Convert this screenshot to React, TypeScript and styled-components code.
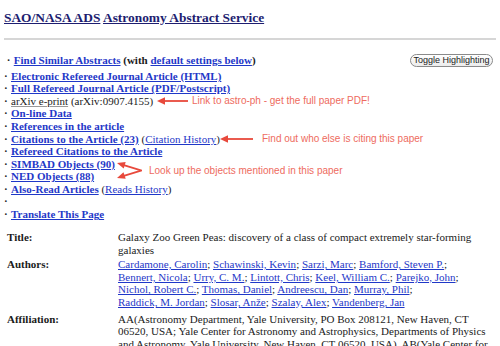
import React from "react";
import styled, { createGlobalStyle } from "styled-components";

const Global = createGlobalStyle`
  html, body { margin: 0; padding: 0; background: #fff; }
  body { font-family: "Liberation Serif", "Times New Roman", serif; color: #1a1a1a; width: 500px; height: 346px; overflow: hidden; }
`;

const Page = styled.div`
  padding: 0 4px;
`;

const Heading = styled.h1`
  margin: 0;
  padding-top: 9px;
  font-size: 13.4px;
  font-weight: bold;
  line-height: 17px;
  a { color: #1d1d70; text-decoration: underline; }
`;

const Rule = styled.hr`
  margin: 12px 0 0 0;
  border: none;
  border-top: 2px solid #d6d6d6;
`;

const List = styled.div`
  position: relative;
  margin-top: 14px;
  font-size: 11px;
  line-height: 12.4px;
`;

const Row = styled.div<{ $gap?: number }>`
  display: flex;
  align-items: baseline;
  margin-top: ${(p) => p.$gap ?? 0}px;
  white-space: nowrap;
`;

const Bullet = styled.span`
  width: 7px;
  flex: none;
  font-weight: bold;
`;

const StrongLink = styled.a`
  color: #1f38c8;
  font-weight: bold;
  text-decoration: underline;
`;

const PlainLink = styled.a`
  color: #1f38c8;
  text-decoration: underline;
`;

const DarkLink = styled.a`
  color: #222;
  text-decoration: underline;
  text-decoration-color: #999;
`;

const Bold = styled.span`
  font-weight: bold;
`;

const ToggleButton = styled.button`
  margin-left: auto;
  margin-right: 3px;
  height: 13px;
  width: 83px;
  padding: 0;
  border: 1px solid #8a8a8a;
  border-radius: 7px;
  background: linear-gradient(#ffffff, #ececec);
  font-family: "Liberation Sans", Arial, sans-serif;
  font-size: 9px;
  line-height: 11px;
  color: #222;
  align-self: center;
`;

const Note = styled.div<{ $x: number; $y: number }>`
  position: absolute;
  left: ${(p) => p.$x}px;
  top: ${(p) => p.$y}px;
  display: flex;
  align-items: center;
  font-family: "Liberation Sans", Arial, sans-serif;
  font-size: 10px;
  line-height: 12px;
  color: #ee6b5e;
  white-space: nowrap;
`;

const NoteText = styled.span<{ $pad: number }>`
  padding-left: ${(p) => p.$pad}px;
`;

const Arrow = ({ w }: { w: number }) => (
  <svg width={w} height="10" viewBox={`0 0 ${w} 10`} style={{ display: "block" }}>
    <line x1="6" y1="5" x2={w} y2="5" stroke="#e8493c" strokeWidth="1.8" />
    <polygon points="0,5 8,1.3 8,8.7" fill="#e8493c" />
  </svg>
);

const Fork = () => (
  <svg width="25" height="21" viewBox="0 0 25 21" style={{ display: "block" }}>
    <polyline points="6,4.8 24,10.5 6,16.2" fill="none" stroke="#e8493c" strokeWidth="1.8" strokeLinejoin="miter" />
    <polygon points="0,3 8.7,1.9 6.7,8.6" fill="#e8493c" />
    <polygon points="0,18 8.7,18.8 6.5,12.2" fill="#e8493c" />
  </svg>
);

const Table = styled.div`
  display: grid;
  grid-template-columns: 111px 1fr;
  row-gap: 1.8px;
  margin-top: 10px;
  padding-left: 3px;
  padding-right: 4px;
  font-size: 11px;
  line-height: 12.7px;
`;

const Label = styled.div<{ $top?: number }>`
  font-weight: bold;
  margin-top: ${(p) => p.$top ?? 0}px;
`;

const Value = styled.div<{ $top?: number }>`
  margin-top: ${(p) => p.$top ?? 0}px;
`;

const AuthorLine = styled.div`
  white-space: nowrap;
`;

const authorLines = [
  ["Cardamone, Carolin", "Schawinski, Kevin", "Sarzi, Marc", "Bamford, Steven P."],
  ["Bennert, Nicola", "Urry, C. M.", "Lintott, Chris", "Keel, William C.", "Parejko, John"],
  ["Nichol, Robert C.", "Thomas, Daniel", "Andreescu, Dan", "Murray, Phil"],
  ["Raddick, M. Jordan", "Slosar, Anže", "Szalay, Alex", "Vandenberg, Jan"],
];

export default function App() {
  return (
    <Page>
      <Global />
      <Heading>
        <a href="#">SAO/NASA ADS</a> <a href="#">Astronomy Abstract Service</a>
      </Heading>
      <Rule />
      <List>
        <Row>
          <Bullet>&nbsp;·</Bullet>&nbsp;
          <StrongLink href="#">Find Similar Abstracts</StrongLink>&nbsp;<Bold>(with</Bold>&nbsp;
          <StrongLink href="#">default settings below</StrongLink><Bold>)</Bold>
          <ToggleButton>Toggle Highlighting</ToggleButton>
        </Row>
        <Row $gap={3}><Bullet>·</Bullet><StrongLink href="#">Electronic Refereed Journal Article (HTML)</StrongLink></Row>
        <Row><Bullet>·</Bullet><StrongLink href="#">Full Refereed Journal Article (PDF/Postscript)</StrongLink></Row>
        <Row><Bullet>·</Bullet><DarkLink href="#">arXiv e-print</DarkLink>&nbsp;(arXiv:0907.4155)</Row>
        <Row><Bullet>·</Bullet><StrongLink href="#">On-line Data</StrongLink></Row>
        <Row><Bullet>·</Bullet><StrongLink href="#">References in the article</StrongLink></Row>
        <Row $gap={1}><Bullet>·</Bullet><StrongLink href="#">Citations to the Article (23)</StrongLink>&nbsp;(<PlainLink href="#">Citation History</PlainLink>)</Row>
        <Row><Bullet>·</Bullet><StrongLink href="#">Refereed Citations to the Article</StrongLink></Row>
        <Row><Bullet>·</Bullet><StrongLink href="#">SIMBAD Objects (90)</StrongLink></Row>
        <Row><Bullet>·</Bullet><StrongLink href="#">NED Objects (88)</StrongLink></Row>
        <Row><Bullet>·</Bullet><StrongLink href="#">Also-Read Articles</StrongLink>&nbsp;(<PlainLink href="#">Reads History</PlainLink>)</Row>
        <Row><Bullet>·</Bullet></Row>
        <Row $gap={1}><Bullet>·</Bullet><StrongLink href="#">Translate This Page</StrongLink></Row>

        <Note $x={153} $y={41}>
          <Arrow w={31} />
          <NoteText $pad={4}>Link to astro-ph - get the full paper PDF!</NoteText>
        </Note>
        <Note $x={216} $y={79}>
          <Arrow w={33} />
          <NoteText $pad={9}>Find out who else is citing this paper</NoteText>
        </Note>
        <Note $x={113} $y={106}>
          <Fork />
          <NoteText $pad={7}>Look up the objects mentioned in this paper</NoteText>
        </Note>
      </List>
      <Table>
        <Label>Title:</Label>
        <Value>Galaxy Zoo Green Peas: discovery of a class of compact extremely star-forming galaxies</Value>
        <Label>Authors:</Label>
        <Value>
          {authorLines.map((line, li) => (
            <AuthorLine key={li}>
              {line.map((a, i) => (
                <React.Fragment key={a}>
                  <PlainLink href="#">{a}</PlainLink>
                  {li === authorLines.length - 1 && i === line.length - 1 ? "" : "; "}
                </React.Fragment>
              ))}
            </AuthorLine>
          ))}
        </Value>
        <Label $top={2}>Affiliation:</Label>
        <Value $top={2}>
          AA(Astronomy Department, Yale University, PO Box 208121, New Haven, CT 06520, USA; Yale Center for Astronomy and Astrophysics, Departments of Physics and Astronomy, Yale University, New Haven, CT 06520, USA), AB(Yale Center for Astronomy and Astrophysics)
        </Value>
      </Table>
    </Page>
  );
}
